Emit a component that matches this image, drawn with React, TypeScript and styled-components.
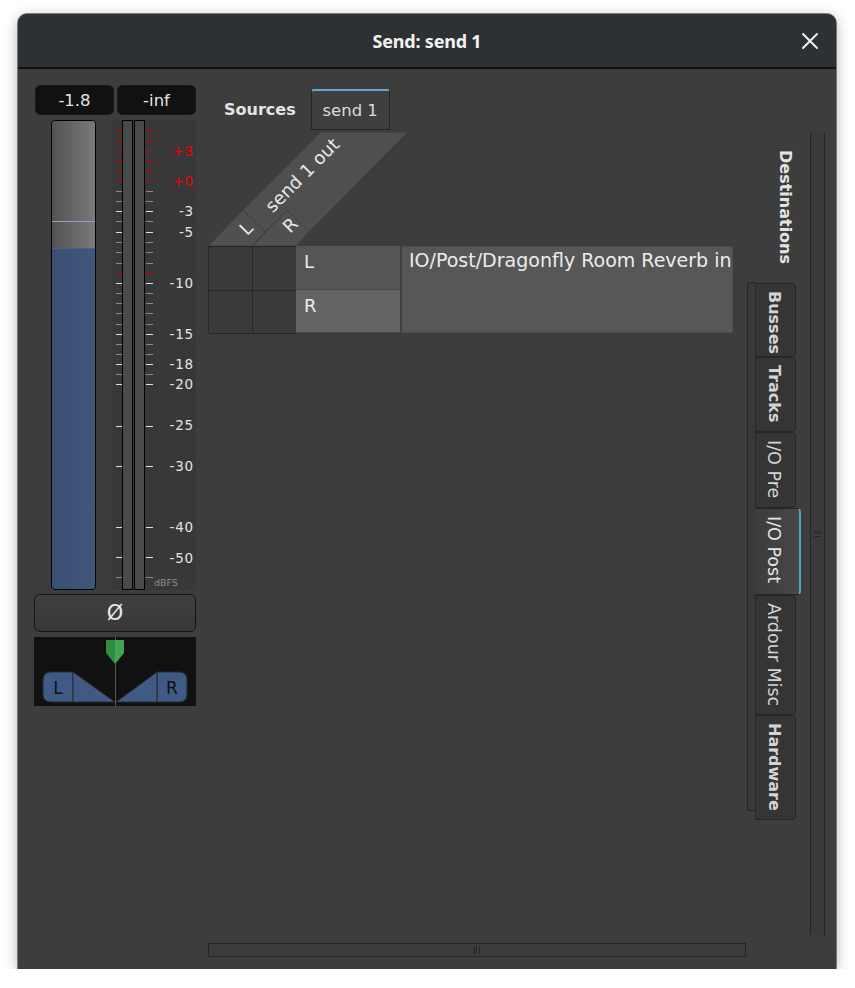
import React from 'react';
import styled, { createGlobalStyle } from 'styled-components';

const GlobalStyle = createGlobalStyle`
  html, body {
    margin: 0;
    padding: 0;
    background: #ffffff;
  }
  body {
    font-family: "DejaVu Sans", Verdana, sans-serif;
    color: #e2e2e2;
  }
`;

const Window = styled.div`
  margin: 14px 0 0 18px;
  width: 818px;
  height: 955px;
  border-radius: 9px 9px 0 0;
  box-shadow: 0 3px 14px rgba(0, 0, 0, 0.32), 0 0 0 1px rgba(0, 0, 0, 0.45);
  overflow: hidden;
  display: flex;
  flex-direction: column;
  background: #3d3d3d;
`;

const TitleBar = styled.div`
  flex: none;
  height: 53px;
  background: #2e3134;
  border-bottom: 2px solid #0f1010;
  display: grid;
  grid-template-columns: 1fr auto 1fr;
  align-items: center;
`;

const Title = styled.div`
  grid-column: 2;
  font-family: "Noto Sans", "DejaVu Sans", sans-serif;
  font-weight: 700;
  font-size: 18px;
  letter-spacing: -0.2px;
  color: #f2f2f2;
`;

const CloseButton = styled.div`
  grid-column: 3;
  justify-self: end;
  margin-right: 17px;
  width: 18px;
  height: 18px;
  display: flex;
`;

const Content = styled.div`
  flex: 1;
  display: flex;
  gap: 12px;
  padding: 16px 0 0 16px;
`;

/* ---------- left strip ---------- */

const Strip = styled.div`
  width: 162px;
  flex: none;
  display: flex;
  flex-direction: column;
`;

const PeakRow = styled.div`
  display: flex;
  gap: 3px;
  height: 30px;
  padding-left: 1px;
`;

const Peak = styled.div`
  flex: 1;
  background: #111111;
  border: 1px solid #1b1b1b;
  border-radius: 5px;
  display: flex;
  align-items: center;
  justify-content: center;
  font-size: 16.5px;
  color: #e4e4e4;
`;

const MeterArea = styled.div`
  margin-top: 5px;
  height: 470px;
  display: flex;
`;

const FaderTrack = styled.div`
  margin-left: 17px;
  width: 45px;
  box-sizing: border-box;
  border: 1px solid #000;
  border-radius: 4px;
  overflow: hidden;
  display: flex;
  flex-direction: column;
`;

const FaderRest = styled.div<{ $unity: number }>`
  height: 127px;
  flex: none;
  background:
    linear-gradient(
      to bottom,
      transparent ${({ $unity }) => $unity}px,
      #8da2c4 ${({ $unity }) => $unity}px,
      #8da2c4 ${({ $unity }) => $unity + 1}px,
      transparent ${({ $unity }) => $unity + 1}px
    ),
    linear-gradient(to right, #525252, #7a7a7a);
`;

const FaderFill = styled.div`
  flex: 1;
  background: linear-gradient(to right, #3a4f72, #40577c);
  border-top: 1px solid #4a628a;
`;

const MeterScale = styled.div`
  margin-left: 16px;
  width: 84px;
  background: #383838;
  display: flex;
`;

const MeterBar = styled.div`
  width: 11px;
  box-sizing: border-box;
  border: 1px solid #000;
  background: #4a4a4a;
  margin-right: 1px;
`;

const PhaseButton = styled.div`
  margin-top: 4px;
  height: 38px;
  box-sizing: border-box;
  border: 1px solid #121212;
  border-radius: 6px;
  background: linear-gradient(to bottom, #3f3f3f, #383838);
  display: flex;
  align-items: center;
  justify-content: center;
  font-size: 21px;
  color: #e8e8e8;
`;

const Panner = styled.div`
  margin-top: 5px;
  height: 69px;
  background: #111111;
  display: flex;
`;

/* ---------- main ---------- */

const Main = styled.div`
  flex: 1;
  display: flex;
  flex-direction: column;
`;

const SourcesRow = styled.div`
  margin-top: 4px;
  height: 41px;
  display: flex;
  align-items: center;
  gap: 15px;
  padding-left: 16px;
`;

const SourcesLabel = styled.div`
  font-weight: 700;
  font-size: 16px;
  color: #e4e4e4;
`;

const SourceTab = styled.div`
  width: 79px;
  height: 41px;
  box-sizing: border-box;
  border: 1px solid #232323;
  border-top: 2px solid #64a9cc;
  border-radius: 3px 3px 0 0;
  background: #3f3f3f;
  display: flex;
  align-items: center;
  justify-content: center;
  font-size: 16.5px;
  color: #dcdcdc;
`;

const Body = styled.div`
  margin-top: 2px;
  display: grid;
  grid-template-columns: 538px 64px 15px;
  grid-template-rows: 803px 14px;
  row-gap: 8px;
`;

const Matrix = styled.div`
  display: flex;
  flex-direction: column;
`;

const MatrixRows = styled.div`
  display: flex;
  height: 87px;
`;

const CellGrid = styled.div`
  width: 88px;
  display: grid;
  grid-template-columns: 44px 44px;
  grid-template-rows: 44px 43px;
  box-sizing: border-box;
  border-left: 1px solid #262626;
  border-top: 1px solid #262626;
`;

const Cell = styled.div`
  background: #3a3a3a;
  border-right: 1px solid #262626;
  border-bottom: 1px solid #262626;
`;

const RowLabels = styled.div`
  width: 104px;
  display: flex;
  flex-direction: column;
`;

const RowLabel = styled.div<{ $bg: string; $h: number }>`
  height: ${({ $h }) => $h}px;
  box-sizing: border-box;
  background: ${({ $bg }) => $bg};
  border-bottom: 1px solid #4a4a4a;
  padding: 5px 0 0 8px;
  font-size: 18px;
  line-height: 22px;
  color: #ececec;
`;

const GroupLabel = styled.div`
  width: 333px;
  box-sizing: border-box;
  background: #575757;
  border: 1px solid #4c4c4c;
  border-left: 2px solid #404040;
  padding: 1px 0 0 7px;
  font-size: 19px;
  line-height: 24px;
  color: #ececec;
  white-space: nowrap;
  overflow: hidden;
`;

const DestPanel = styled.div`
  display: flex;
  flex-direction: column;
  align-items: flex-start;
`;

const DestLabel = styled.div`
  margin: 18px 0 0 29px;
  writing-mode: vertical-rl;
  font-weight: 700;
  font-size: 16px;
  line-height: 20px;
  color: #e4e4e4;
`;

const TabFrame = styled.div`
  margin: 18px 0 0 1px;
  display: flex;
  align-items: flex-start;
`;

const TabPage = styled.div`
  width: 8px;
  height: 529px;
  box-sizing: border-box;
  border: 1px solid #262626;
  border-right: none;
  border-radius: 4px 0 0 4px;
  background: #393939;
`;

const TabColumn = styled.div`
  margin-top: 1px;
  display: flex;
  flex-direction: column;
  align-items: flex-start;
`;

const VTab = styled.div<{ $h: number; $active?: boolean; $bold?: boolean }>`
  height: ${({ $h }) => $h}px;
  width: ${({ $active }) => ($active ? 46 : 41)}px;
  box-sizing: border-box;
  border: 1px solid #262626;
  border-left: ${({ $active }) => ($active ? 'none' : '1px solid #262626')};
  border-right: ${({ $active }) => ($active ? '2px solid #4fa2cf' : '1px solid #262626')};
  border-radius: 0 4px 4px 0;
  background: ${({ $active }) =>
    $active ? 'linear-gradient(to right, #3c3c3c, #474747)' : '#353535'};
  display: flex;
  writing-mode: vertical-rl;
  justify-content: flex-start;
  align-items: center;
  padding: 7px ${({ $active }) => ($active ? 7 : 3)}px 0 0;
  font-weight: ${({ $bold }) => ($bold ? 700 : 400)};
  font-size: ${({ $bold }) => ($bold ? 16 : 17.5)}px;
  line-height: 20px;
  color: ${({ $active }) => ($active ? '#e6e6e6' : '#d4d4d4')};
`;

const VScroll = styled.div`
  box-sizing: border-box;
  border-left: 1px solid #242424;
  border-right: 1px solid #242424;
  background: #3a3a3a;
  display: flex;
  align-items: center;
  justify-content: center;
`;

const HScroll = styled.div`
  box-sizing: border-box;
  border: 1px solid #242424;
  background: #3b3b3b;
  display: flex;
  align-items: center;
  justify-content: center;
`;

const Grip = styled.div<{ $vertical?: boolean }>`
  width: ${({ $vertical }) => ($vertical ? 7 : 6)}px;
  height: ${({ $vertical }) => ($vertical ? 6 : 8)}px;
  background: repeating-linear-gradient(
    ${({ $vertical }) => ($vertical ? 'to bottom' : 'to right')},
    #262626 0,
    #262626 1px,
    transparent 1px,
    transparent 2.5px
  );
`;

/* ---------- data ---------- */

type Tick = [number, 'r' | 'w' | 'g'];

const ticks: Tick[] = [
  [11.5, 'r'], [21.5, 'r'], [31.5, 'r'], [41.5, 'r'], [51.5, 'r'], [61.5, 'r'],
  [71.5, 'g'], [81.5, 'g'], [91.5, 'w'], [101.5, 'g'], [112.5, 'w'], [122.5, 'g'],
  [132.5, 'g'], [143.5, 'g'], [153.5, 'r'], [163.5, 'w'], [173.5, 'g'], [183.5, 'g'],
  [193.5, 'g'], [204.5, 'g'], [214.5, 'w'], [224.5, 'g'], [234.5, 'g'], [244.5, 'w'],
  [254.5, 'g'], [264.5, 'w'], [306.5, 'w'], [346.5, 'w'], [407.5, 'w'], [437.5, 'w'],
  [457.5, 'g'],
];

const labels: [number, string, boolean][] = [
  [31, '+3', true], [61, '+0', true], [91, '-3', false], [112, '-5', false],
  [163, '-10', false], [214, '-15', false], [244, '-18', false], [264, '-20', false],
  [305, '-25', false], [346, '-30', false], [407, '-40', false], [438, '-50', false],
];

const tickColor = { r: '#d40000', w: '#e0e0e0', g: '#8a8a8a' };

const tabs = [
  { label: 'Busses', h: 74, bold: true },
  { label: 'Tracks', h: 75, bold: true },
  { label: 'I/O Pre', h: 76 },
  { label: 'I/O Post', h: 87, active: true },
  { label: 'Ardour Misc', h: 120 },
  { label: 'Hardware', h: 105, bold: true },
];

/* ---------- drawings ---------- */

function LeftTicks() {
  return (
    <svg width="10" height="470">
      {ticks.map(([y, k]) => (
        <line key={y} x1="4" x2="10" y1={y} y2={y} stroke={tickColor[k]} strokeWidth="1" />
      ))}
    </svg>
  );
}

function RightScale() {
  return (
    <svg width="51" height="470">
      {ticks.map(([y, k]) => (
        <line key={y} x1="0" x2="7" y1={y} y2={y} stroke={tickColor[k]} strokeWidth="1" />
      ))}
      {labels.map(([y, t, red]) => (
        <text
          key={t}
          x="48"
          y={y}
          textAnchor="end"
          dominantBaseline="central"
          fontSize="13.5"
          letterSpacing="0.8"
          fill={red ? '#f00000' : '#e4e4e4'}
          fontFamily="DejaVu Sans, sans-serif"
        >
          {t}
        </text>
      ))}
      <text x="8" y="462" dominantBaseline="central" fontSize="9.5" fill="#8c8c8c" fontFamily="DejaVu Sans, sans-serif">
        dBFS
      </text>
    </svg>
  );
}

function PannerDrawing() {
  return (
    <svg width="162" height="69">
      <defs>
        <linearGradient id="mk" x1="0" x2="1">
          <stop offset="0.5" stopColor="#2f8c40" />
          <stop offset="0.5" stopColor="#42a454" />
        </linearGradient>
      </defs>
      <line x1="81.5" x2="81.5" y1="0" y2="69" stroke="#555" strokeWidth="1" />
      <path d="M9,43 Q9,35 17,35 H39 V65 H17 Q9,65 9,57 Z" fill="#3e5a85" stroke="#2a2a2a" />
      <path d="M39,35 L81,65 L39,65 Z" fill="#3e5a85" stroke="#2a2a2a" />
      <path d="M153,43 Q153,35 145,35 H123 V65 H145 Q153,65 153,57 Z" fill="#3e5a85" stroke="#2a2a2a" />
      <path d="M123,35 L82,65 L123,65 Z" fill="#3e5a85" stroke="#2a2a2a" />
      <path d="M72,3 H90 V16 L81,27 L72,16 Z" fill="url(#mk)" />
      <text x="24" y="51" textAnchor="middle" dominantBaseline="central" fontSize="17" fill="#111" fontFamily="DejaVu Sans, sans-serif">
        L
      </text>
      <text x="138" y="51" textAnchor="middle" dominantBaseline="central" fontSize="17" fill="#111" fontFamily="DejaVu Sans, sans-serif">
        R
      </text>
    </svg>
  );
}

function MatrixHeader() {
  const font = 'DejaVu Sans, sans-serif';
  return (
    <svg width="201" height="114" style={{ display: 'block' }}>
      <polygon points="35,78 113,0 200,0 101,100 79,78 57,100" fill="#4f4f4f" stroke="#3e3e3e" />
      <polygon points="0,114 44,114 57,100 35,78" fill="#505050" stroke="#3e3e3e" />
      <polygon points="44,114 88,114 101,100 79,78" fill="#505050" stroke="#3e3e3e" />
      <text
        transform="translate(94,43) rotate(-45)"
        textAnchor="middle"
        dominantBaseline="central"
        fontSize="18"
        fill="#e8e8e8"
        fontFamily={font}
      >
        send 1 out
      </text>
      <text
        transform="translate(38,96) rotate(-45)"
        textAnchor="middle"
        dominantBaseline="central"
        fontSize="18"
        fill="#e8e8e8"
        fontFamily={font}
      >
        L
      </text>
      <text
        transform="translate(82,93) rotate(-45)"
        textAnchor="middle"
        dominantBaseline="central"
        fontSize="18"
        fill="#e8e8e8"
        fontFamily={font}
      >
        R
      </text>
    </svg>
  );
}

export default function App() {
  return (
    <>
      <GlobalStyle />
      <Window>
        <TitleBar>
          <Title>Send: send 1</Title>
          <CloseButton>
            <svg width="18" height="18" viewBox="0 0 18 18">
              <path d="M2,2 L16,16 M16,2 L2,16" stroke="#f0f0f0" strokeWidth="2" strokeLinecap="round" />
            </svg>
          </CloseButton>
        </TitleBar>
        <Content>
          <Strip>
            <PeakRow>
              <Peak>-1.8</Peak>
              <Peak>-inf</Peak>
            </PeakRow>
            <MeterArea>
              <FaderTrack>
                <FaderRest $unity={100} />
                <FaderFill />
              </FaderTrack>
              <MeterScale>
                <LeftTicks />
                <MeterBar />
                <MeterBar />
                <RightScale />
              </MeterScale>
            </MeterArea>
            <PhaseButton>Ø</PhaseButton>
            <Panner>
              <PannerDrawing />
            </Panner>
          </Strip>
          <Main>
            <SourcesRow>
              <SourcesLabel>Sources</SourcesLabel>
              <SourceTab>send 1</SourceTab>
            </SourcesRow>
            <Body>
              <Matrix>
                <MatrixHeader />
                <MatrixRows>
                  <CellGrid>
                    <Cell />
                    <Cell />
                    <Cell />
                    <Cell />
                  </CellGrid>
                  <RowLabels>
                    <RowLabel $bg="#555555" $h={44}>L</RowLabel>
                    <RowLabel $bg="#646464" $h={43}>R</RowLabel>
                  </RowLabels>
                  <GroupLabel>IO/Post/Dragonfly Room Reverb in</GroupLabel>
                </MatrixRows>
              </Matrix>
              <DestPanel>
                <DestLabel>Destinations</DestLabel>
                <TabFrame>
                  <TabPage />
                  <TabColumn>
                    {tabs.map((t) => (
                      <VTab key={t.label} $h={t.h} $active={t.active} $bold={t.bold}>
                        {t.label}
                      </VTab>
                    ))}
                  </TabColumn>
                </TabFrame>
              </DestPanel>
              <VScroll>
                <Grip $vertical />
              </VScroll>
              <HScroll>
                <Grip />
              </HScroll>
            </Body>
          </Main>
        </Content>
      </Window>
    </>
  );
}
